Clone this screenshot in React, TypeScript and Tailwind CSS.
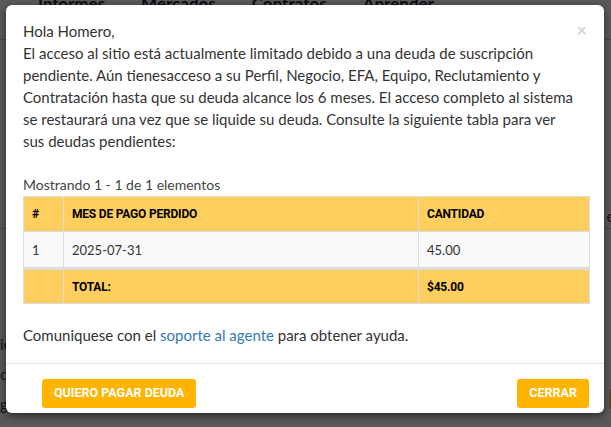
import React from "react";

const rows = [{ n: "1", month: "2025-07-31", amount: "45.00" }];

export default function App() {
  return (
    <div className="relative h-[427px] w-[611px] overflow-hidden bg-white font-['Lato',sans-serif]">
      {/* page behind the backdrop */}
      <div className="-mt-[9px] flex h-[49px] items-start gap-[36px] border-b border-gray-300 px-[38px] text-[17px] font-bold text-gray-800">
        <span>Informes</span>
        <span>Mercados</span>
        <span>Contratos</span>
        <span>Aprender</span>
      </div>
      <div className="mt-[188px] border-b border-gray-300" />
      <div className="mt-[106px] flex flex-col gap-[12px] text-[15px] leading-[18px] text-gray-700">
        <span>ic</span>
        <span>ci</span>
        <span>g</span>
      </div>
      <span className="absolute right-[-4px] top-[204px] text-[16px] text-red-800">e</span>
      <span className="absolute right-[-30px] top-[388px] h-[22px] rounded-[3px] bg-[#ffb400] px-[8px] text-[12px] font-bold leading-[22px] text-white">
        US
      </span>

      {/* backdrop */}
      <div className="absolute inset-0 bg-black/65" />

      {/* modal */}
      <div className="absolute left-[6px] top-[5px] flex h-[408px] w-[598px] flex-col rounded-[6px] bg-white shadow-[0_3px_9px_rgba(0,0,0,0.5)]">
        <button className="absolute right-[17px] top-[16px] text-[18px] font-bold leading-none text-gray-300">
          ×
        </button>
        <div className="px-[17px] pt-[15px] text-[15px] leading-[22px] text-[#333]">
          <p>Hola Homero,</p>
          <p className="pr-[10px]">
            El acceso al sitio está actualmente limitado debido a una deuda de suscripción
            pendiente. Aún tienesacceso a su Perfil, Negocio, EFA, Equipo, Reclutamiento y
            Contratación hasta que su deuda alcance los 6 meses. El acceso completo al sistema
            se restaurará una vez que se liquide su deuda. Consulte la siguiente tabla para ver
            sus deudas pendientes:
          </p>
          <p className="mt-[22px] text-[14px] text-[#444]">Mostrando 1 - 1 de 1 elementos</p>
          <table className="w-[567px] border-collapse border border-[#ddd] font-['Roboto',sans-serif] text-[12px]">
            <thead>
              <tr className="h-[35px] bg-[#fecf5e] text-left font-bold uppercase tracking-[-0.2px] text-black">
                <th className="w-[40px] border border-[#ddd] px-[8px]">#</th>
                <th className="w-[355px] border border-[#ddd] px-[8px]">Mes de pago perdido</th>
                <th className="border border-[#ddd] px-[8px]">Cantidad</th>
              </tr>
            </thead>
            <tbody>
              {rows.map((r) => (
                <tr
                  key={r.n}
                  className="h-[37px] border-b-[3px] border-[#ddd] bg-[#f9f9f9] font-['Lato',sans-serif] text-[13px] text-[#333]"
                >
                  <td className="border border-[#ddd] px-[8px]">{r.n}</td>
                  <td className="border border-[#ddd] px-[8px]">{r.month}</td>
                  <td className="border border-[#ddd] px-[8px]">{r.amount}</td>
                </tr>
              ))}
              <tr className="h-[35px] bg-[#fecf5e] font-bold tracking-[-0.2px] text-black">
                <td className="border border-[#ddd] px-[8px]"></td>
                <td className="border border-[#ddd] px-[8px]">TOTAL:</td>
                <td className="border border-[#ddd] px-[8px]">$45.00</td>
              </tr>
            </tbody>
          </table>
          <p className="mt-[20px]">
            Comuniquese con el <a className="text-[#337ab7]">soporte al agente</a> para obtener
            ayuda.
          </p>
        </div>
        <div className="mt-auto flex items-center justify-between border-t border-[#e5e5e5] px-[15px] pb-[5px] pt-[15px]">
          <button className="ml-[21px] h-[29px] rounded-[3px] bg-[#ffb400] px-[12px] font-['Roboto',sans-serif] text-[12.5px] font-bold text-white">
            QUIERO PAGAR DEUDA
          </button>
          <button className="h-[29px] rounded-[3px] bg-[#ffb400] px-[12px] font-['Roboto',sans-serif] text-[12.5px] font-bold text-white">
            CERRAR
          </button>
        </div>
      </div>
    </div>
  );
}
